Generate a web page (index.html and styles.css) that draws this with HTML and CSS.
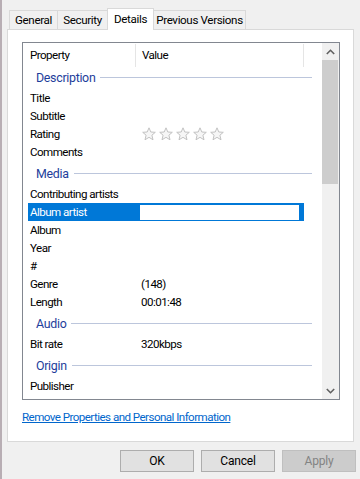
FILE: index.html
```html
<!DOCTYPE html>
<html lang="en">
<head>
    <meta charset="UTF-8">
    <meta name="viewport" content="width=device-width, initial-scale=1.0">
    <title>Details</title>
    <link rel="stylesheet" href="styles.css">
</head>
<body>
    <div class="dialog">
        <div class="tabs">
            <div class="tab tab-general">General</div>
            <div class="tab tab-security">Security</div>
            <div class="tab tab-details active">Details</div>
            <div class="tab tab-prev">Previous Versions</div>
        </div>

        <div class="panel">
            <div class="list">
                <div class="list-body">
                    <div class="list-header">
                        <div class="col-prop">Property</div>
                        <div class="col-val">Value</div>
                        <div class="col-rest"></div>
                    </div>

                    <div class="group first"><span>Description</span><i></i></div>
                    <div class="row"><div class="prop">Title</div><div class="val"></div></div>
                    <div class="row"><div class="prop">Subtitle</div><div class="val"></div></div>
                    <div class="row">
                        <div class="prop">Rating</div>
                        <div class="val stars">
                            <svg width="14" height="14" viewBox="0 0 14 14"><polygon points="7,0.8 8.8,5 13.3,5.3 9.9,8.2 11,12.8 7,10.3 3,12.8 4.1,8.2 0.7,5.3 5.2,5" /></svg>
                            <svg width="14" height="14" viewBox="0 0 14 14"><polygon points="7,0.8 8.8,5 13.3,5.3 9.9,8.2 11,12.8 7,10.3 3,12.8 4.1,8.2 0.7,5.3 5.2,5" /></svg>
                            <svg width="14" height="14" viewBox="0 0 14 14"><polygon points="7,0.8 8.8,5 13.3,5.3 9.9,8.2 11,12.8 7,10.3 3,12.8 4.1,8.2 0.7,5.3 5.2,5" /></svg>
                            <svg width="14" height="14" viewBox="0 0 14 14"><polygon points="7,0.8 8.8,5 13.3,5.3 9.9,8.2 11,12.8 7,10.3 3,12.8 4.1,8.2 0.7,5.3 5.2,5" /></svg>
                            <svg width="14" height="14" viewBox="0 0 14 14"><polygon points="7,0.8 8.8,5 13.3,5.3 9.9,8.2 11,12.8 7,10.3 3,12.8 4.1,8.2 0.7,5.3 5.2,5" /></svg>
                        </div>
                    </div>
                    <div class="row"><div class="prop">Comments</div><div class="val"></div></div>

                    <div class="group"><span>Media</span><i></i></div>
                    <div class="row"><div class="prop">Contributing artists</div><div class="val"></div></div>
                    <div class="row selected">
                        <div class="prop">Album artist</div>
                        <div class="edit-box"></div>
                    </div>
                    <div class="row"><div class="prop">Album</div><div class="val"></div></div>
                    <div class="row"><div class="prop">Year</div><div class="val"></div></div>
                    <div class="row"><div class="prop">#</div><div class="val"></div></div>
                    <div class="row"><div class="prop">Genre</div><div class="val">(148)</div></div>
                    <div class="row"><div class="prop">Length</div><div class="val">00:01:48</div></div>

                    <div class="group"><span>Audio</span><i></i></div>
                    <div class="row"><div class="prop">Bit rate</div><div class="val">320kbps</div></div>

                    <div class="group"><span>Origin</span><i></i></div>
                    <div class="row"><div class="prop">Publisher</div><div class="val"></div></div>
                </div>

                <div class="scrollbar">
                    <div class="scroll-btn">
                        <svg width="9" height="6" viewBox="0 0 9 6"><polyline points="0.8,5 4.5,1.3 8.2,5" /></svg>
                    </div>
                    <div class="scroll-thumb"></div>
                    <div class="scroll-track"></div>
                    <div class="scroll-btn">
                        <svg width="9" height="6" viewBox="0 0 9 6"><polyline points="0.8,1 4.5,4.7 8.2,1" /></svg>
                    </div>
                </div>
            </div>

            <a href="#" class="remove-link">Remove Properties and Personal Information</a>
        </div>

        <div class="buttons">
            <button class="btn">OK</button>
            <button class="btn">Cancel</button>
            <button class="btn disabled">Apply</button>
        </div>
    </div>
</body>
</html>
```

FILE: styles.css
```css
body {
    margin: 0;
    background: #f0f0f0;
    font-family: "Segoe UI", Roboto, "Liberation Sans", sans-serif;
    font-size: 11.6px;
    letter-spacing: -0.55px;
    color: #000;
}

.dialog {
    width: 360px;
    height: 479px;
    box-sizing: border-box;
    padding-left: 5px;
    border-left: 2px solid #b8aeb4;
    overflow: hidden;
}

/* tabs */
.tabs {
    display: flex;
    align-items: flex-end;
    height: 22px;
    margin-top: 8px;
    padding-left: 2px;
    position: relative;
    z-index: 1;
    margin-bottom: -1px;
}

.tab {
    box-sizing: border-box;
    height: 19px;
    margin-bottom: 1px;
    border: 1px solid #d9d9d9;
    border-bottom: none;
    background: #f0f0f0;
    text-align: center;
    line-height: 18px;
    margin-left: -1px;
    white-space: nowrap;
    letter-spacing: -0.35px;
}

.tab-general { width: 49px; margin-left: 0; }
.tab-security { width: 51px; }
.tab-details { width: 47px; }
.tab-prev { width: 93px; }

.tab.active {
    height: 22px;
    margin-bottom: 0;
    background: #fff;
    line-height: 20px;
    position: relative;
    z-index: 2;
}

/* tab page */
.panel {
    box-sizing: border-box;
    width: 347px;
    height: 413px;
    border: 1px solid #d9d9d9;
    background: #fff;
    padding: 12px 0 0 14px;
}

.list {
    box-sizing: border-box;
    width: 318px;
    height: 358px;
    border: 1px solid #828790;
    display: flex;
    overflow: hidden;
}

.list-body {
    width: 299px;
    overflow: hidden;
}

.list-header {
    display: flex;
    height: 25px;
    align-items: center;
}

.list-header .col-prop {
    width: 105px;
    padding-left: 7px;
    height: 23px;
    line-height: 23px;
    border-right: 1px solid #e5e5e5;
}

.list-header .col-val {
    width: 161px;
    padding-left: 6px;
    height: 23px;
    line-height: 23px;
    border-right: 1px solid #e5e5e5;
}

.group {
    display: flex;
    align-items: flex-end;
    height: 24px;
    box-sizing: border-box;
    padding: 0 10px 3px 13px;
    color: #1e3e9b;
    font-size: 12.4px;
    letter-spacing: -0.3px;
}

.group.first {
    height: 21px;
}

.group span {
    line-height: 16px;
}

.group i {
    flex: 1;
    height: 1px;
    background: #bcc6dc;
    margin: 0 0 8px 5px;
}

.row {
    display: flex;
    height: 18px;
    line-height: 18px;
}

.row .prop {
    width: 105px;
    padding-left: 7px;
    white-space: nowrap;
}

.row .val {
    padding-left: 6px;
}

.row.selected {
    background: #0078d7;
    color: #fff;
    margin-left: 5px;
    width: 276px;
}

.row.selected .prop {
    width: 110px;
    padding-left: 2px;
}

.edit-box {
    width: 159px;
    height: 15px;
    margin-top: 2px;
    background: #fff;
}

.stars {
    display: flex;
    align-items: center;
    gap: 3px;
    padding-left: 7px !important;
}

.stars svg polygon {
    fill: #f6f6f6;
    stroke: #c2c2c2;
    stroke-width: 1;
    stroke-linejoin: round;
}

/* scrollbar */
.scrollbar {
    width: 17px;
    background: #f0f0f0;
    display: flex;
    flex-direction: column;
}

.scroll-btn {
    height: 17px;
    display: flex;
    align-items: center;
    justify-content: center;
}

.scroll-btn polyline {
    fill: none;
    stroke: #606060;
    stroke-width: 1.6;
}

.scroll-thumb {
    height: 124px;
    margin-right: 1px;
    background: #cdcdcd;
}

.scroll-track {
    flex: 1;
}

.remove-link {
    display: inline-block;
    margin-top: 9px;
    color: #0066cc;
    line-height: 16px;
}

/* buttons */
.buttons {
    display: flex;
    gap: 7px;
    margin-top: 8px;
    padding-left: 113px;
}

.btn {
    width: 74px;
    height: 22px;
    box-sizing: border-box;
    background: #e1e1e1;
    border: 1px solid #adadad;
    font-family: inherit;
    font-size: 12px;
    letter-spacing: -0.2px;
    color: #000;
    padding: 0;
}

.btn.disabled {
    background: #cccccc;
    border-color: #bfbfbf;
    color: #838383;
}
```
